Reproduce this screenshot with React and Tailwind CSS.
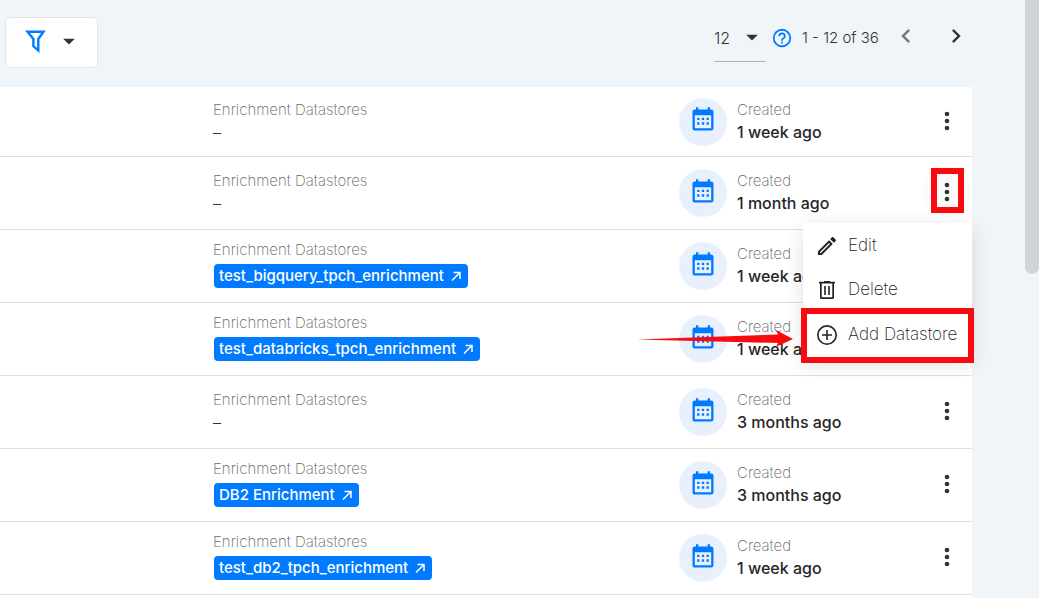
import React, { useState } from 'react'

const stores = [
    { id: 1, enrichment: null, created: '1 week ago' },
    { id: 2, enrichment: null, created: '1 month ago' },
    { id: 3, enrichment: 'test_bigquery_tpch_enrichment', created: '1 week ago' },
    { id: 4, enrichment: 'test_databricks_tpch_enrichment', created: '1 week ago' },
    { id: 5, enrichment: null, created: '3 months ago' },
    { id: 6, enrichment: 'DB2 Enrichment', created: '3 months ago' },
    { id: 7, enrichment: 'test_db2_tpch_enrichment', created: '1 week ago' },
]

const icons = {
    calendar: 'M9,10V12H7V10H9M13,10V12H11V10H13M17,10V12H15V10H17M19,3A2,2 0 0,1 21,5V19A2,2 0 0,1 19,21H5C3.89,21 3,20.1 3,19V5A2,2 0 0,1 5,3H6V1H8V3H16V1H18V3H19M19,19V8H5V19H19M9,14V16H7V14H9M13,14V16H11V14H13M17,14V16H15V14H17Z',
    dots: 'M12,16A2,2 0 0,1 14,18A2,2 0 0,1 12,20A2,2 0 0,1 10,18A2,2 0 0,1 12,16M12,10A2,2 0 0,1 14,12A2,2 0 0,1 12,14A2,2 0 0,1 10,12A2,2 0 0,1 12,10M12,4A2,2 0 0,1 14,6A2,2 0 0,1 12,8A2,2 0 0,1 10,6A2,2 0 0,1 12,4Z',
    caret: 'M7,10L12,15L17,10H7Z',
    left: 'M15.41,16.58L10.83,12L15.41,7.41L14,6L8,12L14,18L15.41,16.58Z',
    right: 'M8.59,16.58L13.17,12L8.59,7.41L10,6L16,12L10,18L8.59,16.58Z',
    help: 'M11,18H13V16H11V18M12,2A10,10 0 0,0 2,12A10,10 0 0,0 12,22A10,10 0 0,0 22,12A10,10 0 0,0 12,2M12,20C7.59,20 4,16.41 4,12C4,7.59 7.59,4 12,4C16.41,4 20,7.59 20,12C20,16.41 16.41,20 12,20M12,6A4,4 0 0,0 8,10H10A2,2 0 0,1 12,8A2,2 0 0,1 14,10C14,12 11,11.75 11,15H13C13,12.75 16,12.5 16,10A4,4 0 0,0 12,6Z',
    pencil: 'M14.06,9L15,9.94L5.92,19H5V18.08L14.06,9M17.66,3C17.41,3 17.15,3.1 16.96,3.29L15.13,5.12L18.88,8.87L20.71,7.04C21.1,6.65 21.1,6 20.71,5.63L18.37,3.29C18.17,3.09 17.92,3 17.66,3M14.06,6.19L3,17.25V21H6.75L17.81,9.94L14.06,6.19Z',
    trash: 'M9,3V3.7H4V5.4H5V19.5A1.5,1.5 0 0,0 6.5,21H17.5A1.5,1.5 0 0,0 19,19.5V5.4H20V3.7H15V3H9M6.7,5.4H17.3V19.3H6.7V5.4M9.2,8V17H10.8V8H9.2M13.2,8V17H14.8V8H13.2Z',
    plus: 'M12,20.3C7.4,20.3 3.7,16.6 3.7,12C3.7,7.4 7.4,3.7 12,3.7C16.6,3.7 20.3,7.4 20.3,12C20.3,16.6 16.6,20.3 12,20.3M12,2A10,10 0 0,0 2,12A10,10 0 0,0 12,22A10,10 0 0,0 22,12A10,10 0 0,0 12,2M12.8,7H11.2V11.2H7V12.8H11.2V17H12.8V12.8H17V11.2H12.8V7Z',
}

const Icon = ({ name, className }) => (
    <svg viewBox="0 0 24 24" fill="currentColor" fillRule="evenodd" aria-hidden="true" className={className}>
        <path d={icons[name]} />
    </svg>
)

const Toolbar = () => {
    const [perPage, setPerPage] = useState('12')

    return (
        <div className="flex items-start justify-between pt-[17px] pl-[5px] h-[87px]">
            <button type="button" aria-label="Filter" className="flex items-center gap-[5px] h-[51px] w-[93px] pb-1 pl-4 bg-white border border-[#e2e5ea] rounded">
                <svg viewBox="0 0 28 28" fill="none" stroke="#007bff" strokeWidth="2.4" aria-hidden="true" className="size-7">
                    <path d="M5.5 4.7H21.5L16.3 12V23.4L11.4 19.3V12Z" />
                </svg>
                <Icon name="caret" className="size-7 text-[#333]" />
            </button>

            <div className="flex items-center h-[42px] text-base text-[#333]">
                <div className="relative h-[45px] mt-[3px] w-[52px] border-b border-[#b0b4ba]">
                    <select
                        aria-label="Items per page"
                        value={perPage} onChange={(e) => { setPerPage(e.target.value) }}
                        className="appearance-none w-full h-[42px] bg-transparent outline-none font-light"
                    >
                        <option>12</option>
                        <option>24</option>
                        <option>48</option>
                    </select>
                    <Icon name="caret" className="size-7 absolute right-0 top-1.5 pointer-events-none" />
                </div>
                <Icon name="help" className="size-[22px] ml-[5px] text-[#007bff]" />
                <span className="ml-[9px] w-[78px] text-[15px] whitespace-nowrap">1 - 12 of 36</span>
                <button type="button" aria-label="Previous page" className="ml-3 pb-1 text-[#757575]"><Icon name="left" className="size-7" /></button>
                <button type="button" aria-label="Next page" className="ml-[22px] mr-[2px] pb-1"><Icon name="right" className="size-7" /></button>
            </div>
        </div>
    )
}

const Menu = () => (
    <div role="menu" className="absolute z-10 top-[66px] right-0 w-[169px] h-[138px] bg-white rounded shadow-[0_4px_20px_rgba(0,0,0,0.12)] text-[17px] font-extralight text-[#222]">
        <button type="button" role="menuitem" className="flex items-center gap-[9px] w-full h-[46px] pl-3">
            <Icon name="pencil" className="size-6" />Edit
        </button>
        <button type="button" role="menuitem" className="flex items-center gap-[9px] w-full h-[42px] pl-3">
            <Icon name="trash" className="size-6" />Delete
        </button>
        <button type="button" role="menuitem" className="flex items-center gap-[9px] w-full h-[48px] pl-3 whitespace-nowrap">
            <Icon name="plus" className="size-6" />Add Datastore
        </button>
        {/* highlight + arrow */}
        <div className="absolute -left-0.5 -right-0.5 top-[85px] h-[55px] border-[6px] border-[#f90a0e] pointer-events-none" />
        <svg viewBox="0 0 156 18" fill="#f90a0e" aria-hidden="true" className="absolute right-[179px] top-[107px] w-[156px] h-[18px] pointer-events-none">
            <path d="M0 9.5L141 4.5L139 0L156 9L139 17L141 13Z" />
        </svg>
    </div>
)

const StoreRow = ({ store, menuOpen, onToggle }) => (
    <li className="relative flex items-center h-[73px] first:h-[70px] border-b border-[#e0e0e0] pl-[213px]">
        <div className="flex-1 min-w-0">
            <div className="text-[15px]/[22px] font-extralight text-[#666]">Enrichment Datastores</div>
            {store.enrichment ? (
                <a href="#" className="flex items-center gap-[5px] w-fit h-6 mt-[3px] mb-[5px] ml-px px-[5px] rounded bg-[#007bff] text-white text-[15px] font-medium whitespace-nowrap">
                    {store.enrichment}
                    <svg viewBox="0 0 14 14" fill="none" stroke="currentColor" strokeWidth="1.5" aria-hidden="true" className="size-3.5">
                        <path d="M3 11.5L11 3.5M4.5 3.5H11V10" />
                    </svg>
                </a>
            ) : (
                <div className="pb-0.5 text-base/[22px] text-[#333]">–</div>
            )}
        </div>

        <div className="flex items-center w-[293px] shrink-0">
            <span className="flex items-center justify-center size-12 pb-[3px] rounded-full bg-[#e9f0fd] text-[#007bff]">
                <Icon name="calendar" className="size-7" />
            </span>
            <div className="flex-1 pl-2.5 pb-0.5">
                <div className="text-[15px]/[22px] font-extralight text-[#666]">Created</div>
                <div className="text-base/[22px] font-medium text-[#262626]">{store.created}</div>
            </div>
            <button
                type="button"
                aria-label="Actions"
                aria-expanded={menuOpen}
                onClick={onToggle}
                className={`relative flex items-center justify-center size-12 mr-px pb-0.5 rounded-full text-[#333] ${menuOpen ? 'bg-[#fafafa]' : ''}`}
            >
                <Icon name="dots" className="size-7" />
                {menuOpen && <span className="absolute left-2 -top-px w-[33px] h-[45px] border-[6px] border-[#f90a0e]" />}
            </button>
        </div>
        {menuOpen && <Menu />}
    </li>
)

const App = () => {
    const [openId, setOpenId] = useState(2)

    return (
        <main className="flex h-screen overflow-hidden bg-[#f0f5fa] font-['Inter',sans-serif] font-light">
            <div className="flex-1 min-w-0 pr-[53px]">
                <Toolbar />
                <ul className="bg-white">
                    {stores.map((store) => (
                        <StoreRow
                            key={store.id}
                            store={store}
                            menuOpen={openId === store.id}
                            onToggle={() => setOpenId(openId === store.id ? null : store.id)}
                        />
                    ))}
                    <li className="h-10" />
                </ul>
            </div>
            <div className="w-3.5 h-[274px] rounded-b-full bg-[#d0d3d8]" />
        </main>
    )
}

export default App
